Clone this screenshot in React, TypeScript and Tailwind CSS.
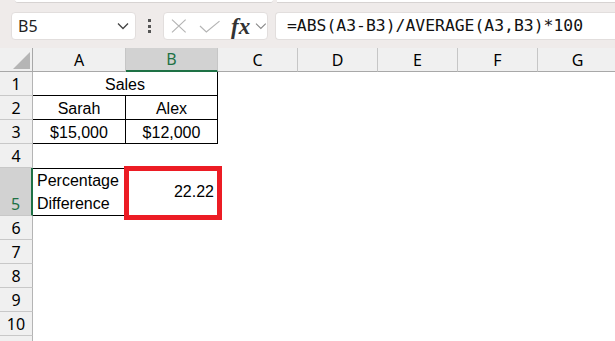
import React from 'react';

const COLS = [
  { id: 'A', w: 93 },
  { id: 'B', w: 92 },
  { id: 'C', w: 80 },
  { id: 'D', w: 80 },
  { id: 'E', w: 80 },
  { id: 'F', w: 80 },
  { id: 'G', w: 80 },
];

const uiFont = { fontFamily: '"Noto Sans", "Open Sans", sans-serif' };
const cellFont = { fontFamily: '"Liberation Sans", Arial, sans-serif' };

function RowHead({ n, h = 24, selected = false }: { n?: number; h?: number; selected?: boolean }) {
  return (
    <div
      className={
        'flex w-[33px] shrink-0 items-end justify-center border-b border-b-[#c8c8c8] pb-[1px] text-[16px] leading-[20px] ' +
        (selected
          ? 'border-r-2 border-r-[#1e7145] bg-[#d2d2d2] text-[#1e7145]'
          : 'border-r border-r-[#b4b4b4] bg-[#f0f0f0] text-black')
      }
      style={{ ...uiFont, height: h }}
    >
      {n}
    </div>
  );
}

function Toolbar() {
  return (
    <div className="h-[48px] bg-[#efebea]">
      {/* ribbon edge */}
      <div className="flex h-[3px] gap-[4px] pl-[15px]">
        <div className="w-[258px] rounded-b-[3px] border-b border-[#d7d3d2] bg-white" />
        <div className="flex-1 border-b border-[#d7d3d2] bg-white" />
      </div>
      <div className="mt-[9px] flex h-[28px] items-stretch pl-[11px]">
        {/* name box */}
        <div className="flex w-[125px] items-center justify-between rounded-[4px] border border-[#e2dedd] bg-white pl-[6px] pr-[6px]">
          <span className="text-[16px] text-[#222]" style={uiFont}>
            B5
          </span>
          <svg width="12" height="8" viewBox="0 0 12 8" fill="none">
            <path d="M1 1.5 L6 6.5 L11 1.5" stroke="#444" strokeWidth="1.3" />
          </svg>
        </div>
        {/* more dots */}
        <div className="flex w-[27px] flex-col items-center justify-center gap-[2.5px]">
          <span className="h-[3px] w-[3px] bg-[#555]" />
          <span className="h-[3px] w-[3px] bg-[#555]" />
          <span className="h-[3px] w-[3px] bg-[#555]" />
        </div>
        {/* cancel / enter / fx */}
        <div className="flex w-[105px] items-center rounded-[4px] border border-[#e2dedd] bg-white pl-[6px]">
          <svg width="16" height="14" viewBox="0 0 16 14" fill="none" className="ml-[1px]">
            <path d="M1 0.5 L15 13.5 M15 0.5 L1 13.5" stroke="#b4b4b4" strokeWidth="1.2" />
          </svg>
          <svg width="22" height="13" viewBox="0 0 22 13" fill="none" className="ml-[12px]">
            <path d="M1 6 L7.5 12 L21 1" stroke="#b4b4b4" strokeWidth="1.2" />
          </svg>
          <span
            className="ml-[11px] text-[23px] font-semibold italic leading-none text-[#333]"
            style={{ fontFamily: '"Liberation Serif", "Times New Roman", serif' }}
          >
            fx
          </span>
          <svg width="12" height="8" viewBox="0 0 12 8" fill="none" className="ml-[5px]">
            <path d="M1 1.5 L6 6.5 L11 1.5" stroke="#888" strokeWidth="1.1" />
          </svg>
        </div>
        {/* formula */}
        <div className="ml-[7px] flex flex-1 items-center rounded-l-[4px] border border-r-0 border-[#e2dedd] bg-white pl-[11px]">
          <span
            className="whitespace-nowrap text-[16.4px] text-[#111]"
            style={{ fontFamily: '"DejaVu Sans Mono", "Liberation Mono", monospace' }}
          >
            =ABS(A3-B3)/AVERAGE(A3,B3)*100
          </span>
        </div>
      </div>
    </div>
  );
}

function ColumnHeader() {
  return (
    <div className="flex h-[24px]">
      <div className="relative w-[33px] shrink-0 border-b border-r border-[#a8a8a8] bg-[#f0f0f0]">
        <svg width="17" height="17" viewBox="0 0 17 17" className="absolute bottom-[2px] right-[2px]">
          <polygon points="17,0 17,17 0,17" fill="#b5b5b5" />
        </svg>
      </div>
      {COLS.map((c) => (
        <div
          key={c.id}
          className={
            'flex shrink-0 items-center justify-center border-r border-r-[#c6c6c6] text-[16px] ' +
            (c.id === 'B'
              ? 'border-b-2 border-b-[#1e7145] bg-[#d2d2d2] text-[#1e7145]'
              : 'border-b border-b-[#a8a8a8] bg-[#f0f0f0] text-black')
          }
          style={{ ...uiFont, width: c.w }}
        >
          {c.id}
        </div>
      ))}
    </div>
  );
}

function Cell({
  w,
  children,
  className = '',
  center = false,
}: {
  w: number;
  children?: React.ReactNode;
  className?: string;
  center?: boolean;
}) {
  return (
    <div
      className={
        'flex shrink-0 text-[16px] leading-[20px] text-black ' +
        (center ? 'items-center ' : 'items-end ') +
        className
      }
      style={{ ...cellFont, width: w }}
    >
      {children}
    </div>
  );
}

export default function App() {
  return (
    <div className="relative h-[341px] w-[615px] overflow-hidden bg-white">
      <Toolbar />
      <ColumnHeader />

      {/* row 1 */}
      <div className="flex h-[24px]">
        <RowHead n={1} />
        <Cell w={185} className="justify-center border-b border-r border-black">
          Sales
        </Cell>
      </div>
      {/* row 2 */}
      <div className="flex h-[24px]">
        <RowHead n={2} />
        <Cell w={93} className="justify-center border-b border-r border-black">
          Sarah
        </Cell>
        <Cell w={92} className="justify-center border-b border-r border-black">
          Alex
        </Cell>
      </div>
      {/* row 3 */}
      <div className="flex h-[24px]">
        <RowHead n={3} />
        <Cell w={93} className="justify-center border-b border-r border-black">
          $15,000
        </Cell>
        <Cell w={92} className="justify-center border-b border-r border-black">
          $12,000
        </Cell>
      </div>
      {/* row 4 */}
      <div className="flex h-[24px]">
        <RowHead n={4} />
      </div>
      {/* row 5 */}
      <div className="relative flex h-[48px]">
        <RowHead n={5} h={48} selected />
        <Cell w={93} className="border-y border-r border-black pl-[4px] leading-[23px]">
          <span>
            Percentage
            <br />
            Difference
          </span>
        </Cell>
        <Cell w={92} center className="justify-end border-y border-black pr-[4px]">
          22.22
        </Cell>
        {/* red highlight annotation */}
        <div className="absolute left-[124px] top-[-2px] h-[54px] w-[98px] border-[5px] border-[#ec1c24]" />
      </div>
      {[6, 7, 8, 9, 10].map((n) => (
        <div key={n} className="flex h-[24px]">
          <RowHead n={n} />
        </div>
      ))}
      <div className="flex h-[24px]">
        <RowHead />
      </div>
    </div>
  );
}
